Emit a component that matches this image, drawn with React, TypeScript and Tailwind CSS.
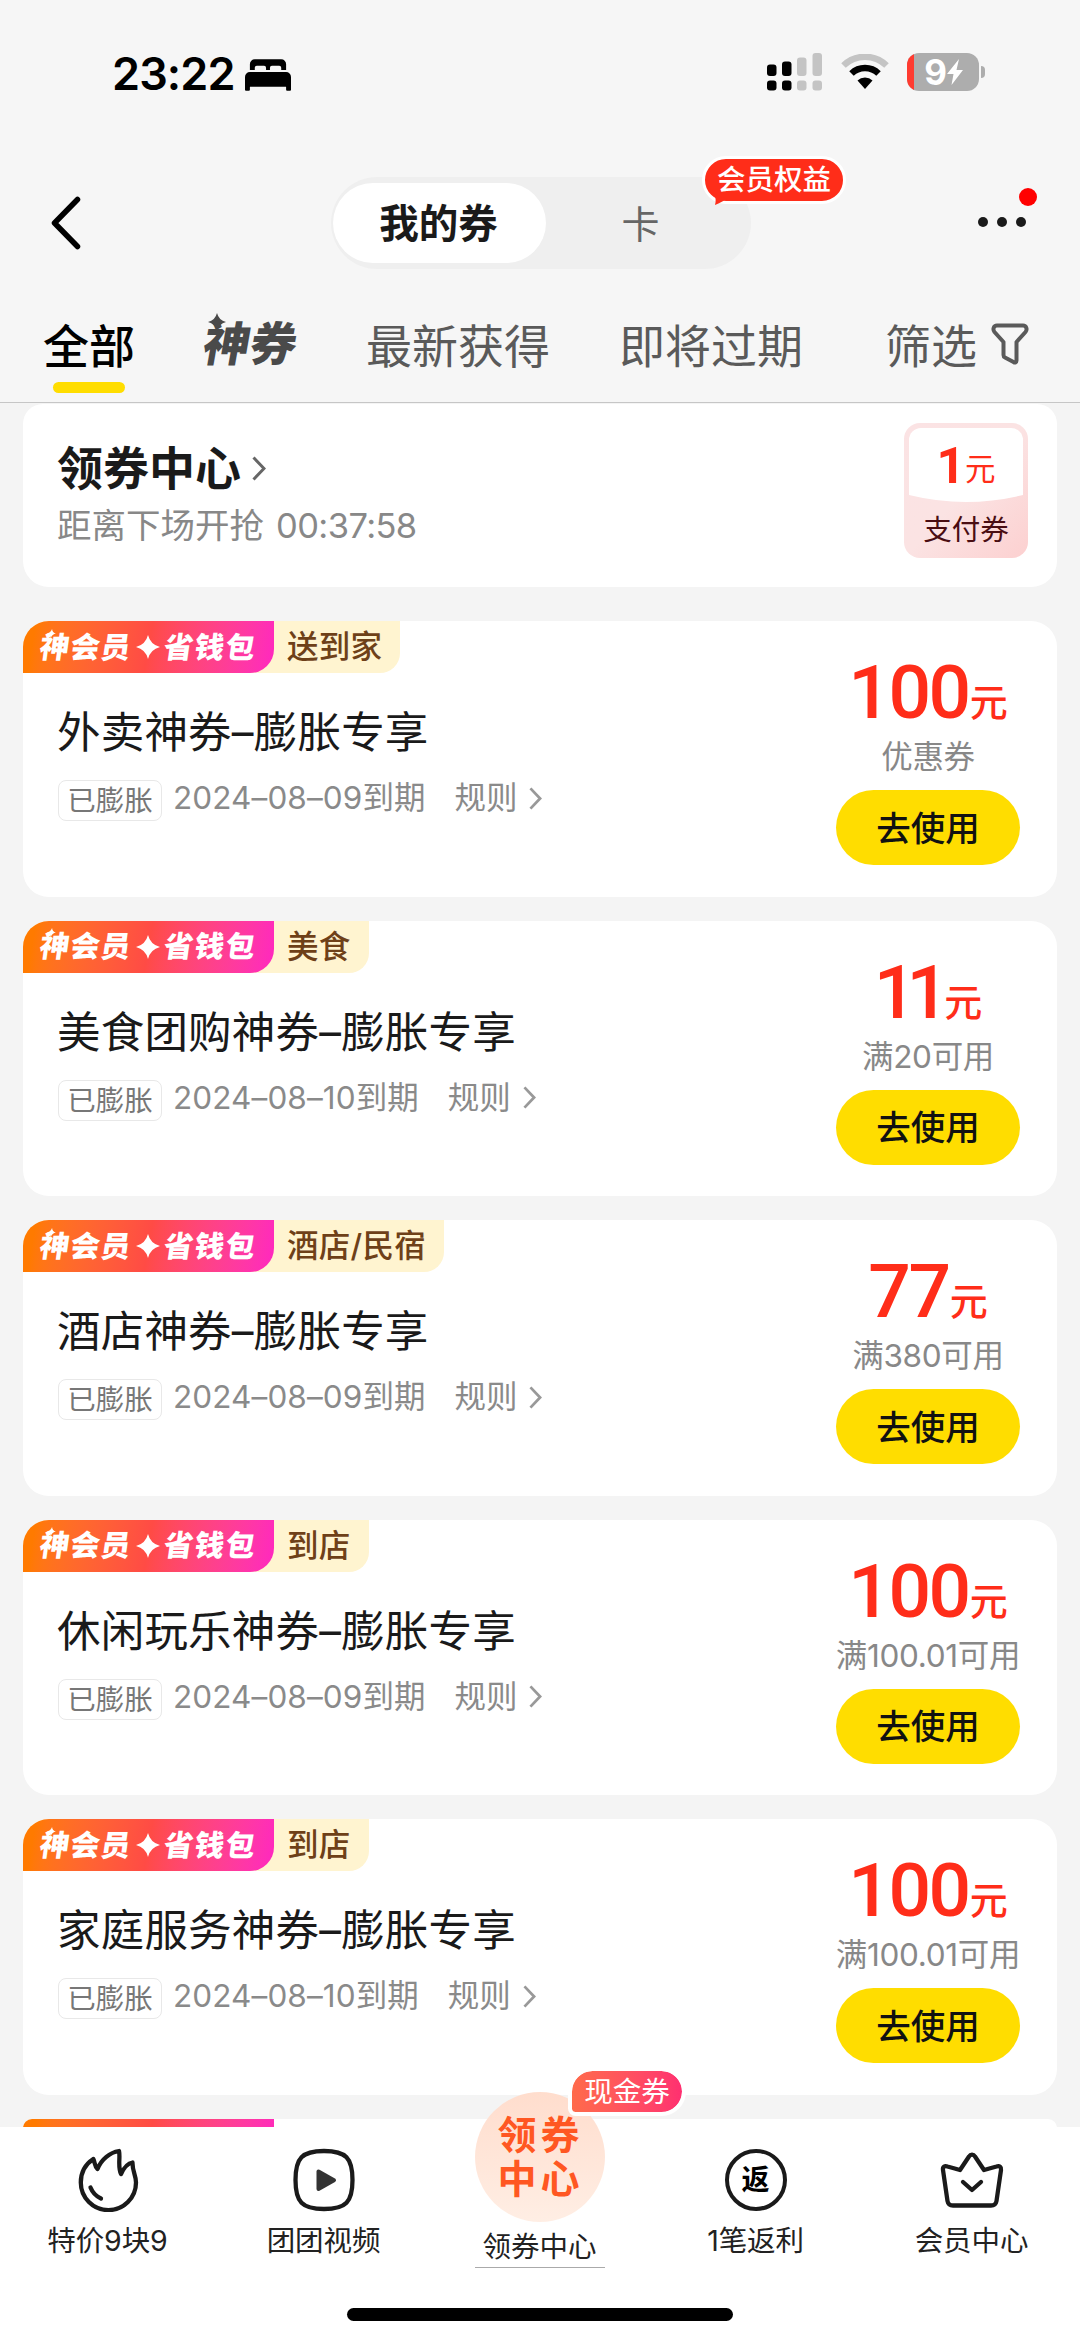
import React from "react";

const FONT = "font-['Inter','Noto_Sans_CJK_SC',sans-serif]";

type Coupon = {
  tag: string;
  title: string;
  date: string;
  price: string;
  note: string;
};

const coupons: Coupon[] = [
  { tag: "送到家", title: "外卖神券–膨胀专享", date: "2024–08–09", price: "100", note: "优惠券" },
  { tag: "美食", title: "美食团购神券–膨胀专享", date: "2024–08–10", price: "11", note: "满20可用" },
  { tag: "酒店/民宿", title: "酒店神券–膨胀专享", date: "2024–08–09", price: "77", note: "满380可用" },
  { tag: "到店", title: "休闲玩乐神券–膨胀专享", date: "2024–08–09", price: "100", note: "满100.01可用" },
  { tag: "到店", title: "家庭服务神券–膨胀专享", date: "2024–08–10", price: "100", note: "满100.01可用" },
];

function BedIcon() {
  return (
    <svg width="46" height="32" viewBox="0 0 47 32" className="mt-[1px]">
      <path d="M5 11V5a5 5 0 0 1 5-5h27a5 5 0 0 1 5 5v6h-5V8.500a2 2 0 0 0-2-2h-7.500a2 2 0 0 0-2 2V11h-4V8.500a2 2 0 0 0-2-2H12a2 2 0 0 0-2 2V11z" />
      <path d="M0 31V18a5 5 0 0 1 5-5h37a5 5 0 0 1 5 5v13a1 1 0 0 1-1 1h-3a1 1 0 0 1-1-1v-3H5v3a1 1 0 0 1-1 1H1a1 1 0 0 1-1-1z" />
    </svg>
  );
}

function SignalIcon() {
  return (
    <svg width="56" height="38" viewBox="0 0 56 38">
      <g fill="#000">
        <rect x="0" y="11.500" width="9.500" height="11.500" rx="3" />
        <rect x="15" y="8.500" width="9.500" height="14.500" rx="3" />
        <rect x="0" y="27.500" width="9.500" height="10" rx="3" />
        <rect x="15" y="27.500" width="9.500" height="10" rx="3" />
      </g>
      <g fill="#c4c4c4">
        <rect x="30" y="4.500" width="9.500" height="18.500" rx="3" />
        <rect x="45.500" y="0" width="9.500" height="23" rx="3" />
        <rect x="30" y="27.500" width="9.500" height="10" rx="3" />
        <rect x="45.500" y="27.500" width="9.500" height="10" rx="3" />
      </g>
    </svg>
  );
}

function WifiIcon() {
  return (
    <svg width="48" height="36" viewBox="0 0 48 36" fill="none">
      <path d="M2.500 11.500a31 31 0 0 1 43 0" stroke="#c4c4c4" strokeWidth="6.500" />
      <path d="M10.500 19.500a19.500 19.500 0 0 1 27 0" stroke="#000" strokeWidth="6.500" />
      <path d="M16.500 26.500a11 11 0 0 1 15 0L24 35z" fill="#000" />
    </svg>
  );
}

function BatteryIcon() {
  return (
    <div className="flex items-center">
      <div className="relative flex h-[38px] w-[72px] items-center justify-center overflow-hidden rounded-[12px] bg-[#adadad]">
        <div className="absolute inset-y-0 left-0 w-[7px] bg-[#ff3b30]" />
        <span className="ml-[2px] text-[35px] leading-[38px] font-bold text-white">9</span>
        <svg width="16" height="26" viewBox="0 0 16 26" fill="#fff">
          <path d="M12 0 0 15h6.500L4.500 26 16 11H9.500z" />
        </svg>
      </div>
      <div className="ml-[2px] h-[12px] w-[4.500px] rounded-r-full bg-[#adadad]" />
    </div>
  );
}

function StatusBar() {
  return (
    <div className="flex h-[147px] items-start justify-between pr-[95px] pl-[112px]">
      <div className="flex items-center gap-[10px] pt-[50px]">
        <span className="text-[45px] leading-[48px] font-semibold tracking-[-0.9px] text-black">23:22</span>
        <BedIcon />
      </div>
      <div className="flex items-center gap-[18px] pt-[53px]">
        <SignalIcon />
        <WifiIcon />
        <BatteryIcon />
      </div>
    </div>
  );
}

function TopNav() {
  return (
    <div className="flex h-[152px] items-start pt-[30px] pr-[52px] pl-[51px]">
      <svg width="30" height="54" viewBox="0 0 30 54" fill="none" className="mt-[19px]">
        <path d="M26.500 3.500 3.500 27l23 23.500" stroke="#000" strokeWidth="5.500" strokeLinecap="round" strokeLinejoin="round" />
      </svg>
      <div className="relative ml-[250px] flex h-[92px] w-[420px] rounded-full bg-[#efefef] p-[6px] pl-[2px]">
        <div className="flex h-[80px] w-[213px] items-center justify-center rounded-full bg-white pt-[3px] pr-[2px] text-[39.500px] font-semibold text-[#1a1a1a]">
          我的券
        </div>
        <div className="flex h-[80px] flex-1 items-center justify-center pt-[2px] pr-[10px] text-[38px] text-[#666]">卡</div>
        <div className="absolute top-[-21px] left-[371px] h-[48px] w-[144px] rounded-full border-[3px] border-white bg-[#ff2d19] text-center text-[28.500px] leading-[41px] font-medium whitespace-nowrap text-white">
          会员权益
          <svg width="14" height="12" viewBox="0 0 14 12" className="absolute top-[35px] left-[9px]">
            <path d="M0 0c2 4 2 7 1 11 5-2 8-4 12-6z" fill="#ff2d19" />
          </svg>
        </div>
      </div>
      <div className="relative ml-auto flex w-[50px] items-center gap-[9px] pt-[40px]">
        <i className="size-[10px] rounded-full bg-[#1a1a1a]" />
        <i className="size-[10px] rounded-full bg-[#1a1a1a]" />
        <i className="size-[10px] rounded-full bg-[#1a1a1a]" />
        <i className="absolute top-[11px] left-[41px] size-[18px] rounded-full bg-[#ff0000]" />
      </div>
    </div>
  );
}

function Sparkle({ className }: { className: string }) {
  return (
    <svg viewBox="0 0 20 20" fill="currentColor" className={className}>
      <path d="M10 0Q12 8 20 10Q12 12 10 20Q8 12 0 10Q8 8 10 0z" />
    </svg>
  );
}

function FilterTabs() {
  return (
    <div className="flex h-[104px] items-start border-b border-[#c6c6c6] pl-[43px] text-[46px] leading-[66px] whitespace-nowrap text-[#5a5a5a]">
      <div className="flex w-[92px] flex-col items-center pt-[13.500px] font-medium text-black">
        <span>全部</span>
        <span className="mt-[3.500px] mr-[1px] h-[11px] w-[72px] rounded-full bg-[#ffdd00]" />
      </div>
      <div className="relative ml-[69px] w-[92px] pt-[12px] font-black text-[#4a4a4a]">
        <span className="inline-block -skew-x-10 text-[46.500px]">神券</span>
        <Sparkle className="absolute top-[14px] left-[4px] size-[18px]" />
      </div>
      <div className="ml-[70px] w-[184px] pt-[13.500px]">最新获得</div>
      <div className="ml-[69px] w-[184px] pt-[13.500px]">即将过期</div>
      <div className="ml-[82px] flex items-center pt-[13.500px]">
        筛选
        <svg width="38" height="42" viewBox="0 0 38 42" fill="none" className="mb-[3px] ml-[14px]">
          <path d="M6 2.500h26c3.500 0 4.500 4 2.500 6.500L25.500 19v18.500c0 2-1.500 2.500-3 1.500L14 34.500c-1-.5-1.500-1.500-1.500-2.500V19L3.500 9C1.500 6.500 2.500 2.500 6 2.500z" stroke="#5a5a5a" strokeWidth="4" strokeLinejoin="round" />
        </svg>
      </div>
    </div>
  );
}

function Chevron({ className }: { className: string }) {
  return (
    <svg viewBox="0 0 14 25" fill="none" stroke="currentColor" strokeWidth="3" className={className}>
      <path d="M1.500 1.500 12 12.500 1.500 23.500" />
    </svg>
  );
}

function CenterCard() {
  return (
    <div className="flex h-[183px] shrink-0 justify-between rounded-t-[20px] rounded-b-[26px] bg-white pr-[29px] pl-[34px]">
      <div className="pt-[31px]">
        <div className="flex items-center">
          <span className="text-[46px] leading-[66px] font-semibold text-[#1a1a1a]">领券中心</span>
          <Chevron className="ml-[11px] h-[25px] w-[14px] text-[#666]" />
        </div>
        <div className="flex items-center text-[34.500px] leading-[50px] text-[#888]">
          <span>距离下场开抢</span>
          <span className="ml-[12px] tracking-[-0.6px]">00:37:58</span>
        </div>
      </div>
      <div className="relative mt-[19px] flex h-[135px] w-[124px] flex-col items-center overflow-hidden rounded-[16px] bg-linear-to-br from-[#fbe3e4] via-[#fbe3e3] to-[#fcd0d0]">
        <svg width="114" height="75" viewBox="0 0 114 75" className="absolute top-[5px] left-[5px]">
          <path d="M0 12A12 12 0 0 1 12 0h90a12 12 0 0 1 12 12v55Q57 81 0 67z" fill="#fff" />
        </svg>
        <div className="relative flex h-[84px] items-baseline pt-[13px] text-[#ff2d19]">
          <span className="font-['Roboto'] text-[50px] leading-[60px] font-bold">1</span>
          <span className="-translate-y-[3px] text-[30.500px]">元</span>
        </div>
        <div className="relative text-[28.500px] leading-[46px] text-[#4a0d12]">支付券</div>
      </div>
    </div>
  );
}

function MemberBanner() {
  return (
    <div className="flex h-[52px] w-[251px] items-center rounded-br-[24px] bg-linear-100 from-[#ff7a00] from-5% via-[#ff4b45] via-50% to-[#ff26c0] pl-[17px] text-white">
      <span className="relative -skew-x-8 text-[29.500px] font-black tracking-[1px]">
        神会员
        <Sparkle className="absolute top-[4px] left-[5px] size-[9px]" />
      </span>
      <Sparkle className="mx-[4px] size-[24px]" />
      <span className="-skew-x-8 text-[29.500px] font-black tracking-[1.3px]">省钱包</span>
    </div>
  );
}

function CouponCard({ coupon }: { coupon: Coupon }) {
  return (
    <div className="flex h-[275.5px] shrink-0 justify-between overflow-hidden rounded-[26px] bg-white">
      <div>
        <div className="flex h-[52px]">
          <div className="flex rounded-br-[20px] bg-[#fff4d0]">
            <MemberBanner />
            <div className="pr-[18px] pl-[13px] text-[31.500px] leading-[51px] font-medium tracking-[0.3px] text-[#6e4018]">
              {coupon.tag}
            </div>
          </div>
        </div>
        <div className="mt-[28px] pl-[34px] text-[43.500px] leading-[62px] tracking-[0.2px] whitespace-nowrap text-[#1a1a1a]">
          {coupon.title}
        </div>
        <div className="mt-[12px] flex items-center pl-[35px] text-[31.500px] leading-[46px] text-[#8a8a8a]">
          <span className="mt-[5px] h-[41px] w-[104px] rounded-[8px] border border-[#e8e8e8] text-center text-[28.500px] leading-[39px] text-[#777]">
            已膨胀
          </span>
          <span className="ml-[11px] tracking-[0.1px]">{coupon.date}</span>
          <span>到期</span>
          <span className="ml-[29px]">规则</span>
          <Chevron className="ml-[12px] h-[23px] w-[13px] text-[#999]" />
        </div>
      </div>
      <div className="mr-[37px] flex w-[184px] flex-col items-center pt-[31px]">
        <div className="flex h-[80px] items-baseline text-[#ff2d19]">
          <span
            className={`font-['Roboto'] text-[75px] leading-[80px] font-medium ${
              coupon.price === "11" ? "tracking-[-10px]" : "tracking-[-2.5px]"
            }`}
          >
            {coupon.price}
          </span>
          <span
            className={`-translate-y-[2px] text-[38px] leading-[40px] font-medium ${
              coupon.price === "11" ? "ml-[5px]" : "ml-px"
            }`}
          >
            元
          </span>
        </div>
        <div className="mt-[2px] text-[31.500px] leading-[46px] tracking-[-0.3px] whitespace-nowrap text-[#888]">
          {coupon.note}
        </div>
        <div className="mt-[10px] flex h-[75px] w-[184px] items-center justify-center rounded-full bg-[#ffdd00] pt-[2px] text-[34.500px] font-medium text-[#111]">
          去使用
        </div>
      </div>
    </div>
  );
}

function FlameIcon() {
  return (
    <svg width="62" height="64" viewBox="0 0 62 64" fill="none" stroke="#1a1a1a" strokeWidth="4.300" strokeLinecap="round" strokeLinejoin="round">
      <path d="M16.300 11C8 16.500 3.800 25.500 3.800 34.500a27.600 27.600 0 0 0 55.200 0c0-7.500-3.700-11-3.500-20-5.500 1-8.500 5-11.500 11.500C40.500 18 43.500 10 42 3 33 4.500 24.500 11 20.500 21 17.500 18 18 14.500 16.300 11z" />
      <path d="M13.500 39.500c2 5 5 8.500 10.500 11" />
    </svg>
  );
}

function VideoIcon() {
  return (
    <svg width="64" height="64" viewBox="0 0 64 64">
      <path d="M32 3c22 0 28.500 7 28.500 29S54 61 32 61 3.500 54 3.500 32 10 3 32 3z" fill="none" stroke="#1a1a1a" strokeWidth="4.300" />
      <path d="M26.500 23.500v17.500l15.500-8.700z" fill="#333" stroke="#333" strokeWidth="4" strokeLinejoin="round" />
    </svg>
  );
}

function RebateIcon() {
  return (
    <div className="flex size-[62px] items-center justify-center rounded-full border-[4.300px] border-[#1a1a1a] text-[28px] leading-none font-bold text-black">
      返
    </div>
  );
}

function CrownIcon() {
  return (
    <svg width="64" height="58" viewBox="0 0 64 58" fill="none" stroke="#1a1a1a" strokeWidth="4.300" strokeLinecap="round" strokeLinejoin="round">
      <path d="M29 5.500 20 19 7.500 15.500C4.500 14.500 2.500 16 3 19l4.500 31c.5 3 2.500 4.500 5.500 4.500h38c3 0 5-1.500 5.500-4.500L61 19c.5-3-1.500-4.500-4.500-3.500L44 19 35 5.500c-1.500-2.500-4.500-2.500-6 0z" />
      <path d="m23 31 9 8 9-8" />
    </svg>
  );
}

function NavItem({ icon, label }: { icon: React.ReactNode; label: string }) {
  return (
    <div className="flex w-[216px] flex-col items-center pt-[21px] pr-px">
      <div className="flex h-[64px] items-center">{icon}</div>
      <span className="mt-[8px] text-[28.500px] leading-[41px] tracking-[-0.1px] text-[#222]">{label}</span>
    </div>
  );
}

function BottomNav() {
  return (
    <div className="relative flex h-[214px] shrink-0 bg-white">
      <NavItem icon={<FlameIcon />} label="特价9块9" />
      <NavItem icon={<VideoIcon />} label="团团视频" />
      <div className="relative flex w-[216px] flex-col items-center pr-px">
        <div className="-mt-[35px] flex size-[130px] flex-col items-center justify-center rounded-full bg-linear-to-b from-[#ffddcd] to-[#ffeee4] pl-[2px] text-[39px] leading-[44px] font-bold tracking-[4px] text-[#ff5722]">
          <span>领券</span>
          <span>中心</span>
        </div>
        <span className="mt-[3px] h-[43px] w-[130px] border-b border-[#aaa] text-center text-[28.500px] leading-[43px] text-[#222]">领券中心</span>
        <div className="absolute -top-[60px] left-[136px] h-[49px] w-[118px] rounded-[26px] rounded-bl-[8px] border-4 border-white bg-linear-to-r from-[#ff6a4a] to-[#ff2f70] bg-clip-padding text-center text-[28.500px] leading-[41px] whitespace-nowrap text-white">
          现金券
        </div>
      </div>
      <NavItem icon={<RebateIcon />} label="1笔返利" />
      <NavItem icon={<CrownIcon />} label="会员中心" />
      <div className="absolute bottom-[20px] left-[347px] h-[13px] w-[386px] rounded-full bg-black" />
    </div>
  );
}

export default function App() {
  return (
    <div className={`${FONT} flex h-[2341px] w-[1080px] flex-col overflow-hidden bg-[#f4f4f4]`}>
      <div className="h-[402px] shrink-0 bg-[#f6f6f6]">
        <StatusBar />
        <TopNav />
        <FilterTabs />
      </div>
      <div className="flex min-h-0 flex-1 flex-col overflow-hidden px-[23px] pt-[2px]">
        <CenterCard />
        <div className="mt-[34px] flex flex-col gap-[24px]">
          {coupons.map((coupon, index) => (
            <CouponCard key={index} coupon={coupon} />
          ))}
          <div className="h-[9px] overflow-hidden rounded-t-[26px] bg-white">
            <div className="h-[52px] w-[251px] bg-linear-100 from-[#ff7a00] from-5% via-[#ff4b45] via-50% to-[#ff26c0]" />
          </div>
        </div>
      </div>
      <BottomNav />
    </div>
  );
}
